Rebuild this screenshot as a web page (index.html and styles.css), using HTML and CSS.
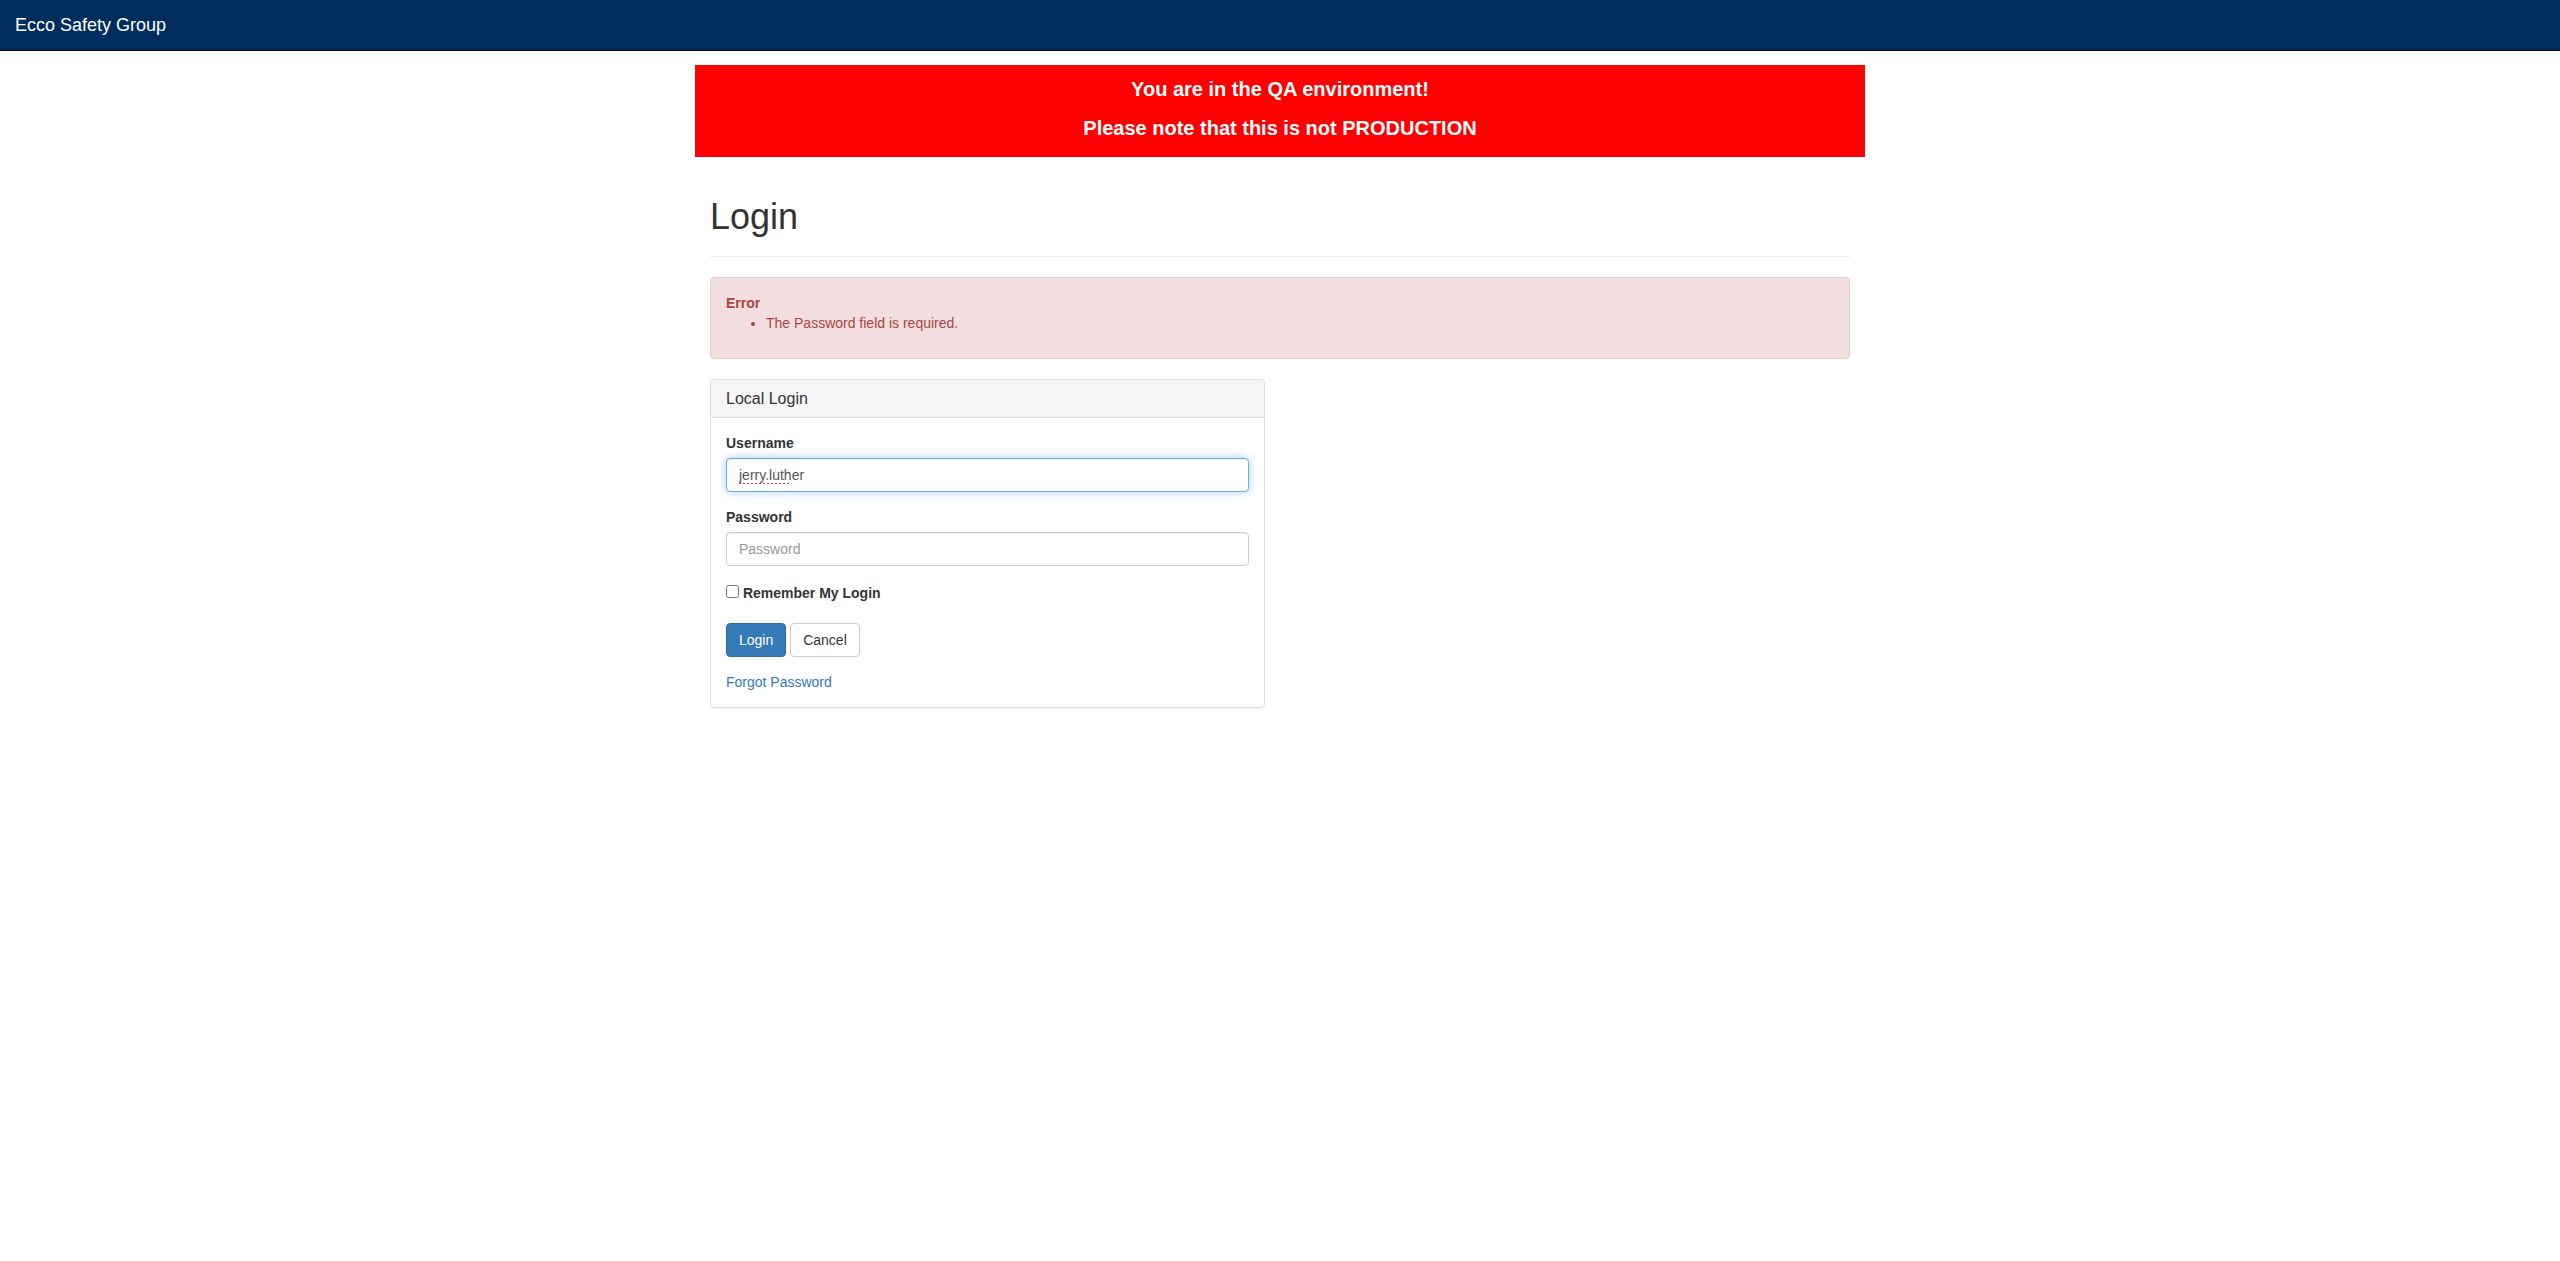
FILE: index.html
```html
<!DOCTYPE html>
<html lang="en">
<head>
<meta charset="utf-8">
<title>Login - Ecco Safety Group</title>
<link rel="stylesheet" href="styles.css">
</head>
<body>
<nav class="navbar">
  <a class="navbar-brand" href="#">Ecco Safety Group</a>
</nav>

<div class="env-banner">
  <div class="env-line">You are in the QA environment!</div>
  <div class="env-line">Please note that this is not PRODUCTION</div>
</div>

<div class="container">
  <div class="page-header">
    <h1>Login</h1>
  </div>

  <div class="alert alert-danger">
    <strong>Error</strong>
    <div class="validation-summary-errors">
      <ul>
        <li>The Password field is required.</li>
      </ul>
    </div>
  </div>

  <div class="row">
    <div class="col">
      <div class="panel">
        <div class="panel-heading">
          <h3 class="panel-title">Local Login</h3>
        </div>
        <div class="panel-body">
          <form>
            <div class="form-group">
              <label for="Username">Username</label>
              <input class="form-control is-focused spell" id="Username" name="Username" value="jerry.luther" placeholder="Username">
            </div>
            <div class="form-group">
              <label for="Password">Password</label>
              <input type="password" class="form-control" id="Password" name="Password" placeholder="Password">
            </div>
            <div class="form-group">
              <label for="RememberLogin"><input type="checkbox" class="check" id="RememberLogin" name="RememberLogin"> <strong>Remember My Login</strong></label>
            </div>
            <div class="form-group">
              <button type="button" class="btn btn-primary">Login</button>
              <button type="button" class="btn btn-default">Cancel</button>
            </div>
            <div class="links">
              <a class="link" href="#">Forgot Password</a>
            </div>
          </form>
        </div>
      </div>
    </div>
    <div class="col"></div>
  </div>
</div>
</body>
</html>
```

FILE: styles.css
```css
* {
  box-sizing: border-box;
}

html, body {
  margin: 0;
  padding: 0;
  background: #fff;
}

body {
  font-family: "Liberation Sans", Arial, Helvetica, sans-serif;
  font-size: 14px;
  line-height: 1.42857143;
  color: #333;
}

/* Navbar */
.navbar {
  height: 51px;
  background: #002d5e;
  border-bottom: 1px solid #000;
  display: flex;
  align-items: flex-start;
}

.navbar-brand {
  display: block;
  padding: 15px;
  height: 50px;
  font-size: 18px;
  line-height: 20px;
  color: #fff;
  text-decoration: none;
}

/* QA banner */
.env-banner {
  width: 1170px;
  margin: 14px auto 0;
  padding: 5px 0 9px;
  background: #ff0000;
  color: #fff;
  font-weight: bold;
  font-size: 20px;
  line-height: 39px;
  text-align: center;
}

/* Container */
.container {
  width: 1170px;
  margin: 0 auto;
  padding: 0 15px;
}

.page-header {
  margin: 40px 0 20px;
  padding-bottom: 9px;
  border-bottom: 1px solid #eee;
}

.page-header h1 {
  margin: 0 0 10px;
  font-size: 36px;
  font-weight: 500;
  line-height: 1.1;
  color: #333;
}

/* Alert */
.alert {
  padding: 15px;
  margin-bottom: 20px;
  border: 1px solid transparent;
  border-radius: 4px;
}

.alert-danger {
  color: #a94442;
  background-color: #f2dede;
  border-color: #ebccd1;
}

.alert strong {
  font-weight: bold;
}

.validation-summary-errors ul {
  margin: 0 0 10px;
  padding-left: 40px;
}

/* Grid */
.row {
  display: grid;
  grid-template-columns: 1fr 1fr;
  column-gap: 30px;
}

/* Panel */
.panel {
  margin-bottom: 20px;
  background: #fff;
  border: 1px solid #ddd;
  border-radius: 4px;
  box-shadow: 0 1px 1px rgba(0, 0, 0, 0.05);
}

.panel-heading {
  padding: 10px 15px;
  background: #f5f5f5;
  border-bottom: 1px solid #ddd;
  border-radius: 3px 3px 0 0;
}

.panel-title {
  margin: 0;
  font-size: 16px;
  font-weight: 500;
  line-height: 1.1;
  color: #333;
}

.panel-body {
  padding: 15px;
}

form {
  margin: 0;
}

.form-group {
  margin-bottom: 15px;
}

label {
  display: inline-block;
  max-width: 100%;
  margin-bottom: 5px;
  font-weight: bold;
}

.form-control {
  display: block;
  width: 100%;
  height: 34px;
  padding: 6px 12px;
  font-family: inherit;
  font-size: 14px;
  line-height: 1.42857143;
  color: #555;
  background-color: #fff;
  border: 1px solid #ccc;
  border-radius: 4px;
  box-shadow: inset 0 1px 1px rgba(0, 0, 0, 0.075);
  outline: none;
}

.form-control::placeholder {
  color: #999;
}

.form-control.is-focused {
  border-color: #66afe9;
  box-shadow: inset 0 1px 1px rgba(0, 0, 0, 0.075), 0 0 8px rgba(102, 175, 233, 0.6);
}

.form-control.spell {
  background-image: repeating-linear-gradient(90deg, #e33 0 2px, transparent 2px 4px);
  background-size: 50px 1px;
  background-position: 12px 24px;
  background-repeat: no-repeat;
}

.check {
  margin: 4px 0 0;
  width: 13px;
  height: 13px;
  line-height: normal;
  vertical-align: baseline;
}

/* Buttons */
.btn {
  display: inline-block;
  margin: 0;
  padding: 6px 12px;
  font-family: inherit;
  font-size: 14px;
  font-weight: normal;
  line-height: 1.42857143;
  text-align: center;
  white-space: nowrap;
  vertical-align: middle;
  border: 1px solid transparent;
  border-radius: 4px;
  cursor: pointer;
}

.btn-primary {
  color: #fff;
  background-color: #337ab7;
  border-color: #2e6da4;
}

.btn-default {
  color: #333;
  background-color: #fff;
  border-color: #ccc;
}

.link {
  color: #337ab7;
  text-decoration: none;
}
```
